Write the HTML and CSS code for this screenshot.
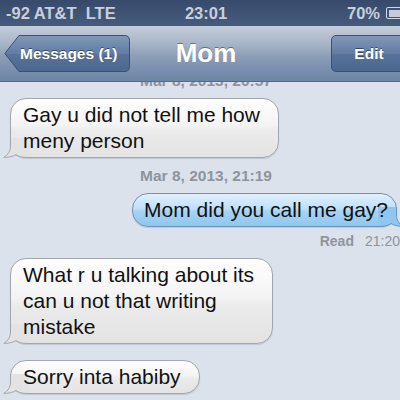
FILE: index.html
```html
<!DOCTYPE html>
<html lang="en">
<head>
<meta charset="utf-8">
<title>Mom</title>
<link rel="stylesheet" href="styles.css">
</head>
<body>
<div class="screen">
  <div class="status">
    <span class="carrier">-92 AT&amp;T&nbsp;&nbsp;LTE</span>
    <span class="clock">23:01</span>
    <span class="power">70%<span class="battery"><span class="level"></span></span></span>
  </div>
  <div class="nav">
    <div class="back">
      <svg class="back-shape" width="126" height="37" viewBox="0 0 126 37">
        <defs>
          <linearGradient id="bg" x1="0" y1="0" x2="0" y2="1">
            <stop offset="0" stop-color="#8198b8"/>
            <stop offset="0.5" stop-color="#627ca2"/>
            <stop offset="0.52" stop-color="#587299"/>
            <stop offset="1" stop-color="#4c6890"/>
          </linearGradient>
        </defs>
        <path d="M15,0.5 H120.5 Q125.5,0.5 125.5,5.5 V31.5 Q125.5,36.5 120.5,36.5 H15 L0.8,18.5 Z" fill="url(#bg)" stroke="#3a4f72" stroke-width="1"/>
      </svg>
      <span class="back-label">Messages (1)</span>
    </div>
    <div class="title">Mom</div>
    <div class="edit">Edit</div>
  </div>
  <div class="thread">
    <div class="stamp hidden">Mar 8, 2013, 20:57</div>
    <div class="bubble in">Gay u did not tell me how<br>meny person<svg class="tail" width="26" height="20" viewBox="0 0 26 20"><path class="tail-fill" d="M8,0 L8,8 C8,13 5,17 0.8,19.3 C5,19.6 10,18.5 13,16.5 C15.5,18.5 19,19.5 26,19.5 L26,0 Z"/><path class="tail-line" d="M7.5,0 L7.5,8 C7.5,13 5,17 0.8,19.3 C5,19.6 10,18.5 13,16.5 C15.5,18.5 19,19.5 26,19.5"/></svg></div>
    <div class="stamp">Mar 8, 2013, 21:19</div>
    <div class="bubble out">Mom did you call me gay?<svg class="tail" width="26" height="20" viewBox="0 0 26 20"><path class="tail-fill" d="M8,0 L8,8 C8,13 5,17 0.8,19.3 C5,19.6 10,18.5 13,16.5 C15.5,18.5 19,19.5 26,19.5 L26,0 Z"/><path class="tail-line" d="M7.5,0 L7.5,8 C7.5,13 5,17 0.8,19.3 C5,19.6 10,18.5 13,16.5 C15.5,18.5 19,19.5 26,19.5"/></svg></div>
    <div class="read"><b>Read</b><span class="read-time">21:20</span></div>
    <div class="bubble in gap-read">What r u talking about its<br>can u not that writing<br>mistake<svg class="tail" width="26" height="20" viewBox="0 0 26 20"><path class="tail-fill" d="M8,0 L8,8 C8,13 5,17 0.8,19.3 C5,19.6 10,18.5 13,16.5 C15.5,18.5 19,19.5 26,19.5 L26,0 Z"/><path class="tail-line" d="M7.5,0 L7.5,8 C7.5,13 5,17 0.8,19.3 C5,19.6 10,18.5 13,16.5 C15.5,18.5 19,19.5 26,19.5"/></svg></div>
    <div class="bubble in last">Sorry inta habiby<svg class="tail" width="26" height="20" viewBox="0 0 26 20"><path class="tail-fill" d="M8,0 L8,8 C8,13 5,17 0.8,19.3 C5,19.6 10,18.5 13,16.5 C15.5,18.5 19,19.5 26,19.5 L26,0 Z"/><path class="tail-line" d="M7.5,0 L7.5,8 C7.5,13 5,17 0.8,19.3 C5,19.6 10,18.5 13,16.5 C15.5,18.5 19,19.5 26,19.5"/></svg></div>
  </div>
</div>
</body>
</html>
```
FILE: styles.css
```css
* { box-sizing: border-box; }
html, body { margin: 0; padding: 0; }
body {
  font-family: "Liberation Sans", Helvetica, Arial, sans-serif;
  background: #dbe2ec;
  overflow: hidden;
}
.screen {
  width: 400px;
  height: 400px;
  overflow: hidden;
  display: flex;
  flex-direction: column;
  background: #dbe2ec;
}

/* status bar */
.status {
  height: 26px;
  flex: none;
  display: grid;
  grid-template-columns: 1fr auto 1fr;
  align-items: center;
  padding-left: 12px;
  background: linear-gradient(#374a6c, #475b7c);
  color: #c8d0dc;
  font-weight: bold;
  font-size: 16.5px;
  white-space: nowrap;
}
.carrier { margin-left: -6px; }
.clock { text-align: center; }
.power {
  justify-self: end;
  display: flex;
  align-items: center;
  margin-right: -12px;
}
.battery {
  width: 26px;
  height: 12px;
  margin-left: 6px;
  border: 1.5px solid #d0d7e1;
  border-radius: 2px;
  padding: 1.5px;
  display: flex;
}
.level { width: 70%; background: #c3ccd8; }

/* nav bar */
.nav {
  position: relative;
  z-index: 2;
  height: 56px;
  flex: none;
  display: grid;
  grid-template-columns: 1fr auto 1fr;
  align-items: center;
  padding-left: 12px;
  background: linear-gradient(#c3cdda 0%, #aab7c9 30%, #8c9eb7 55%, #7a8faf 80%, #6e85a4 100%);
  border-bottom: 1px solid #56698a;
  color: #fff;
  font-weight: bold;
}
.back {
  justify-self: start;
  margin-left: -8px;
  display: grid;
  width: 126px;
  height: 37px;
}
.back-shape { grid-area: 1 / 1; }
.back-label {
  grid-area: 1 / 1;
  align-self: center;
  padding-left: 16px;
  font-size: 15.5px;
  text-shadow: 0 -1px 0 rgba(0, 0, 0, 0.45);
}
.title {
  font-size: 26px;
  text-shadow: 0 -1px 0 rgba(0, 0, 0, 0.4);
}
.edit {
  justify-self: end;
  margin-right: -7px;
  width: 76px;
  height: 37px;
  border: 1px solid #3a4f72;
  border-radius: 5px;
  background: linear-gradient(#8198b8 0%, #627ca2 50%, #587299 52%, #4c6890 100%);
  display: flex;
  align-items: center;
  justify-content: center;
  font-size: 15.5px;
  text-shadow: 0 -1px 0 rgba(0, 0, 0, 0.45);
}

/* thread */
.thread {
  display: flex;
  flex-direction: column;
  align-items: flex-start;
}
.stamp {
  align-self: stretch;
  text-align: center;
  padding-left: 12px;
  font-size: 15.5px;
  line-height: 18px;
  font-weight: bold;
  color: #8e949e;
  margin-top: 9px;
}
.stamp.hidden { margin-top: -10px; }

.bubble {
  position: relative;
  z-index: 0;
  font-size: 21px;
  line-height: 26px;
  color: #111;
  white-space: nowrap;
  border-radius: 16px;
  padding: 3px 18px 3px 12px;
  margin-top: 8px;
}
.bubble.in {
  margin-left: 10px;
  border: 1px solid #a2a6ad;
  background: linear-gradient(#fefefe 0%, #f4f4f4 45%, #ebebeb 55%, #e3e3e3 100%);
  box-shadow: 0 1px 1px rgba(0, 0, 0, 0.12);
}
.bubble.out {
  align-self: flex-end;
  margin-right: 3px;
  padding: 3px 8px 3px 11px;
  border: 1px solid #6e93ba;
  background: linear-gradient(#e0f0fd 0%, #bfe0f9 45%, #a5d2f4 55%, #8fc7f0 100%);
  box-shadow: 0 1px 1px rgba(0, 0, 0, 0.12);
}
.tail {
  position: absolute;
  z-index: -1;
  bottom: -1px;
  left: -8px;
}
.bubble.out .tail {
  left: auto;
  right: -8px;
  transform: scaleX(-1);
}
.tail-line { fill: none; stroke: #a2a6ad; stroke-width: 1; }
.tail-fill { fill: #e3e3e3; }
.bubble.out .tail-line { stroke: #6e93ba; }
.bubble.out .tail-fill { fill: #8fc7f0; }

.read {
  align-self: flex-end;
  margin-top: 6px;
  margin-right: 0;
  font-size: 14px;
  line-height: 16px;
  color: #8e949e;
  white-space: nowrap;
}
.read b { font-weight: bold; }
.read-time { margin-left: 11px; }
.bubble.gap-read { margin-top: 9px; }
.bubble.last { margin-top: 16px; }
```
